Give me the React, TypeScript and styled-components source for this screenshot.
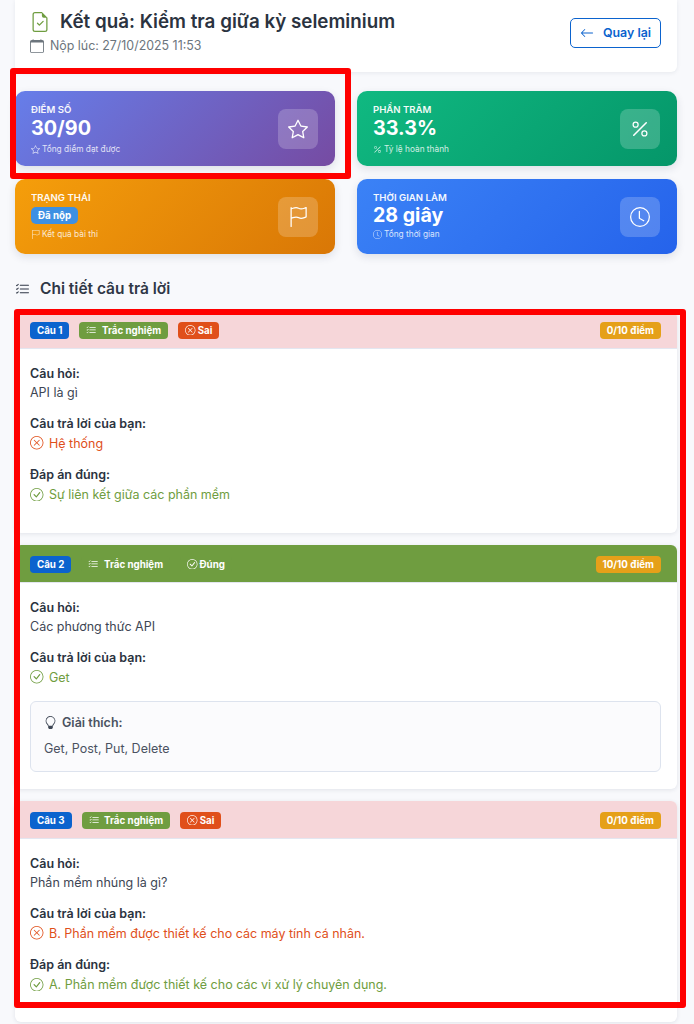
import React from "react";
import styled, { createGlobalStyle } from "styled-components";
import {
  BsFileEarmarkCheck,
  BsCalendar,
  BsArrowLeft,
  BsStar,
  BsPercent,
  BsFlag,
  BsClock,
  BsListCheck,
  BsXCircle,
  BsCheckCircle,
  BsLightbulb,
} from "react-icons/bs";

const Global = createGlobalStyle`
  html, body { margin: 0; padding: 0; background: #f8f9fc; }
  body { font-family: Inter, "Liberation Sans", sans-serif; color: #2b3340; overflow: hidden; }
  * { box-sizing: border-box; }
`;

const Page = styled.div`
  position: relative;
  width: 694px;
  height: 1024px;
  padding: 0 17px 0 15px;
  overflow: hidden;
`;

const HeaderCard = styled.header`
  display: flex;
  justify-content: space-between;
  height: 72px;
  padding: 11px 16px 0 15px;
  background: #fff;
  border-radius: 0 0 6px 6px;
  box-shadow: 0 1px 4px rgba(30, 40, 70, 0.08);
`;

const TitleBlock = styled.div`
  display: flex;
  flex-direction: column;
  gap: 4px;
`;

const Title = styled.h1`
  display: flex;
  align-items: center;
  gap: 10px;
  margin: 0;
  font-size: 18.8px;
  line-height: 22px;
  font-weight: 600;
  color: #2b3340;
  svg { color: #6f9d40; font-size: 20px; }
`;

const Submitted = styled.div`
  display: flex;
  align-items: center;
  gap: 6px;
  font-size: 12.4px;
  line-height: 18px;
  color: #6c757d;
  svg { font-size: 14px; }
`;

const BackButton = styled.button`
  display: flex;
  align-items: center;
  justify-content: center;
  gap: 9px;
  width: 91px;
  height: 30px;
  margin-top: 7px;
  padding: 0 0 1px;
  background: #fff;
  border: 1px solid #0b63ce;
  border-radius: 5px;
  color: #0b63ce;
  font: 600 12.4px Inter, sans-serif;
  svg { font-size: 14px; }
`;

const StatsGrid = styled.section`
  display: grid;
  grid-template-columns: 320px 320px;
  column-gap: 22px;
  row-gap: 13px;
  margin-top: 19px;
`;

const StatCard = styled.div<{ $from: string; $to: string }>`
  display: flex;
  align-items: center;
  justify-content: space-between;
  height: 75px;
  padding: 0 17px 0 16px;
  border-radius: 10px;
  color: #fff;
  background: linear-gradient(135deg, ${(p) => p.$from}, ${(p) => p.$to});
  box-shadow: 0 3px 8px rgba(30, 40, 70, 0.12);
`;

const StatText = styled.div<{ $compact?: boolean }>`
  display: flex;
  flex-direction: column;
  padding: ${(p) => (p.$compact ? "0 0 1px" : "2px 0 0")};
`;

const StatLabel = styled.div`
  font-size: 9.6px;
  line-height: 12px;
  font-weight: 600;
  text-transform: uppercase;
  opacity: 0.95;
`;

const StatValue = styled.div<{ $compact?: boolean }>`
  font-size: ${(p) => (p.$compact ? "19.6px" : "19.8px")};
  line-height: ${(p) => (p.$compact ? "22px" : "25px")};
  font-weight: 700;
`;

const StatusPill = styled.span`
  align-self: flex-start;
  margin: 3px 0 2px;
  padding: 0 7px;
  height: 17px;
  line-height: 17px;
  border-radius: 5px;
  background: #3d90e3;
  font-size: 9.75px;
  font-weight: 700;
`;

const StatNote = styled.div`
  display: flex;
  align-items: center;
  gap: 2px;
  margin-top: 2px;
  font-size: 8.3px;
  line-height: 12px;
  opacity: 0.8;
  svg { font-size: 9px; }
`;

const StatIcon = styled.div`
  display: flex;
  align-items: center;
  justify-content: center;
  width: 40px;
  height: 40px;
  border-radius: 8px;
  background: rgba(255, 255, 255, 0.2);
  font-size: 20px;
`;

const SectionTitle = styled.h2`
  display: flex;
  align-items: center;
  gap: 10px;
  margin: 25px 0 12px;
  font-size: 15.5px;
  line-height: 20px;
  font-weight: 600;
  color: #2f3746;
  svg { font-size: 15px; }
`;

const QuestionList = styled.div`
  display: flex;
  flex-direction: column;
  gap: 12px;
`;

const QuestionCard = styled.article`
  background: #fff;
  border-radius: 6px;
  overflow: hidden;
  box-shadow: 0 1px 4px rgba(30, 40, 70, 0.1);
`;

const QuestionHeader = styled.div<{ $correct: boolean }>`
  display: flex;
  align-items: center;
  justify-content: space-between;
  height: 38px;
  padding: 1px 16px 0 15px;
  background: ${(p) => (p.$correct ? "#6f9d40" : "#f6d6d9")};
  border-bottom: 1px solid #e3e6f0;
`;

const BadgeRow = styled.div`
  display: flex;
  gap: 10px;
`;

const Badge = styled.span<{ $bg: string }>`
  display: inline-flex;
  align-items: center;
  gap: 2px;
  height: 17px;
  padding: 0 7px;
  border-radius: 4px;
  background: ${(p) => p.$bg};
  color: #fff;
  font-size: 9.75px;
  font-weight: 700;
  svg { font-size: 10.5px; }
`;

const TypeIcon = styled(BsListCheck)`
  margin-right: 3px;
`;

const Body = styled.div<{ $bottom: number }>`
  display: flex;
  flex-direction: column;
  gap: 13px;
  padding: 16px 16px ${(p) => p.$bottom}px 15px;
`;

const Field = styled.div`
  display: flex;
  flex-direction: column;
`;

const FieldLabel = styled.div`
  font-size: 12.5px;
  line-height: 18px;
  font-weight: 600;
  color: #2b3340;
`;

const FieldText = styled.div`
  margin-top: 0.5px;
  font-size: 12.5px;
  line-height: 18px;
  color: #3d4654;
`;

const Answer = styled.div<{ $correct: boolean }>`
  display: flex;
  align-items: center;
  gap: 5.5px;
  margin: 1px 0 0.5px;
  font-size: 12.5px;
  line-height: 19px;
  color: ${(p) => (p.$correct ? "#6f9d40" : "#e04f1a")};
  svg { font-size: 13.5px; }
`;

const Explanation = styled.div`
  margin-top: 0.5px;
  padding: 12px 13px 13px;
  background: #fbfbfd;
  border: 1px solid #dde3ee;
  border-radius: 6px;
`;

const ExplanationTitle = styled.div`
  display: flex;
  align-items: center;
  gap: 5px;
  margin-bottom: 8px;
  font-size: 12.5px;
  line-height: 18px;
  font-weight: 600;
  color: #4a5261;
  svg { font-size: 13px; color: #3d4654; }
`;

const ExplanationText = styled.div`
  font-size: 12.5px;
  line-height: 18px;
  color: #4a5261;
`;

const Highlight = styled.div<{ $x: number; $y: number; $w: number; $h: number }>`
  position: absolute;
  left: ${(p) => p.$x}px;
  top: ${(p) => p.$y}px;
  width: ${(p) => p.$w}px;
  height: ${(p) => p.$h}px;
  border: 6px solid #ff0000;
  border-radius: 3px;
  pointer-events: none;
`;

type Q = {
  n: number;
  correct: boolean;
  score: string;
  question: string;
  answer: string;
  right?: string;
  explanation?: string;
  bottom: number;
};

const questions: Q[] = [
  { n: 1, correct: false, score: "0/10 điểm", question: "API là gì", answer: "Hệ thống", right: "Sự liên kết giữa các phần mềm", bottom: 28.5 },
  { n: 2, correct: true, score: "10/10 điểm", question: "Các phương thức API", answer: "Get", explanation: "Get, Post, Put, Delete", bottom: 17.5 },
  { n: 3, correct: false, score: "0/10 điểm", question: "Phần mềm nhúng là gì?", answer: "B. Phần mềm được thiết kế cho các máy tính cá nhân.", right: "A. Phần mềm được thiết kế cho các vi xử lý chuyên dụng.", bottom: 27.5 },
];

const Card = ({ q }: { q: Q }) => (
  <QuestionCard>
    <QuestionHeader $correct={q.correct}>
      <BadgeRow>
        <Badge $bg="#0b63ce">Câu {q.n}</Badge>
        <Badge $bg="#6f9d40"><TypeIcon /> Trắc nghiệm</Badge>
        <Badge $bg={q.correct ? "#6f9d40" : "#e04f1a"}>
          {q.correct ? <BsCheckCircle /> : <BsXCircle />} {q.correct ? "Đúng" : "Sai"}
        </Badge>
      </BadgeRow>
      <Badge $bg="#e5a019">{q.score}</Badge>
    </QuestionHeader>
    <Body $bottom={q.bottom}>
      <Field>
        <FieldLabel>Câu hỏi:</FieldLabel>
        <FieldText>{q.question}</FieldText>
      </Field>
      <Field>
        <FieldLabel>Câu trả lời của bạn:</FieldLabel>
        <Answer $correct={q.correct}>
          {q.correct ? <BsCheckCircle /> : <BsXCircle />} {q.answer}
        </Answer>
      </Field>
      {q.right && (
        <Field>
          <FieldLabel>Đáp án đúng:</FieldLabel>
          <Answer $correct><BsCheckCircle /> {q.right}</Answer>
        </Field>
      )}
      {q.explanation && (
        <Explanation>
          <ExplanationTitle><BsLightbulb /> Giải thích:</ExplanationTitle>
          <ExplanationText>{q.explanation}</ExplanationText>
        </Explanation>
      )}
    </Body>
  </QuestionCard>
);

export default function App() {
  return (
    <Page>
      <Global />
      <HeaderCard>
        <TitleBlock>
          <Title><BsFileEarmarkCheck /> Kết quả: Kiểm tra giữa kỳ seleminium</Title>
          <Submitted><BsCalendar /> Nộp lúc: 27/10/2025 11:53</Submitted>
        </TitleBlock>
        <BackButton><BsArrowLeft /> Quay lại</BackButton>
      </HeaderCard>

      <StatsGrid>
        <StatCard $from="#667eea" $to="#764ba2">
          <StatText>
            <StatLabel>Điểm số</StatLabel>
            <StatValue>30/90</StatValue>
            <StatNote><BsStar /> Tổng điểm đạt được</StatNote>
          </StatText>
          <StatIcon><BsStar /></StatIcon>
        </StatCard>
        <StatCard $from="#10b981" $to="#059669">
          <StatText>
            <StatLabel>Phần trăm</StatLabel>
            <StatValue>33.3%</StatValue>
            <StatNote><BsPercent /> Tỷ lệ hoàn thành</StatNote>
          </StatText>
          <StatIcon><BsPercent /></StatIcon>
        </StatCard>
        <StatCard $from="#f59e0b" $to="#d97706">
          <StatText $compact>
            <StatLabel>Trạng thái</StatLabel>
            <StatusPill>Đã nộp</StatusPill>
            <StatNote><BsFlag /> Kết quả bài thi</StatNote>
          </StatText>
          <StatIcon><BsFlag /></StatIcon>
        </StatCard>
        <StatCard $from="#3b82f6" $to="#2563eb">
          <StatText $compact>
            <StatLabel>Thời gian làm</StatLabel>
            <StatValue $compact>28 giây</StatValue>
            <StatNote><BsClock /> Tổng thời gian</StatNote>
          </StatText>
          <StatIcon><BsClock /></StatIcon>
        </StatCard>
      </StatsGrid>

      <SectionTitle><BsListCheck /> Chi tiết câu trả lời</SectionTitle>

      <QuestionList>
        {questions.map((q) => <Card key={q.n} q={q} />)}
      </QuestionList>

      <Highlight $x={10} $y={68} $w={341} $h={111} />
      <Highlight $x={14} $y={309} $w={672} $h={699} />
    </Page>
  );
}
